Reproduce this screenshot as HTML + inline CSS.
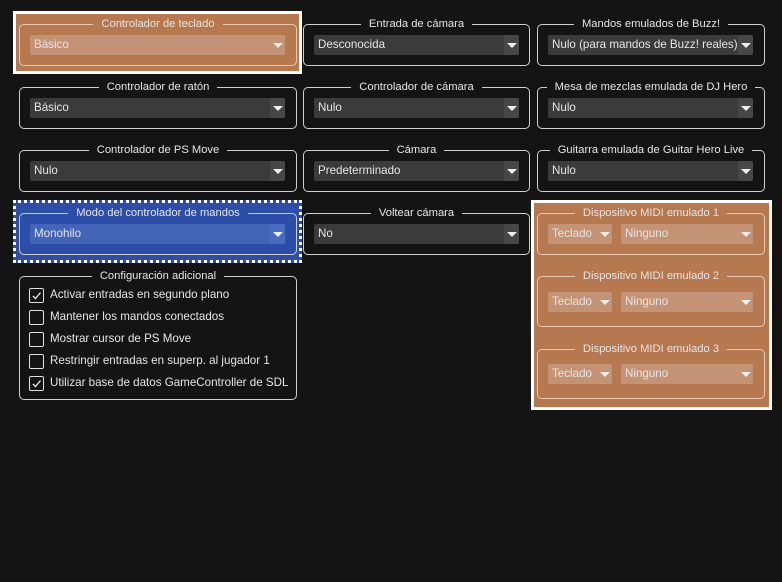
<!DOCTYPE html>
<html><head><meta charset="utf-8"><style>
*{box-sizing:border-box}
body{margin:0;width:782px;height:582px;background:#141414;font-family:"Liberation Sans",sans-serif;font-size:11.2px;color:#e6e6e6;position:relative;overflow:hidden}
.a{position:absolute}
.g{position:absolute;border:1px solid #cfcfcf;border-radius:5px}
.t{position:absolute;top:-9px;left:0;right:0;text-align:center;line-height:16px;white-space:nowrap}
.t span{background:#141414;padding:0 8px}
.c{position:absolute;height:20px;background:#3b3b3b;border-radius:2px;line-height:20px;padding-left:4px;font-size:11.6px;white-space:nowrap;overflow:hidden}
.c i{position:absolute;right:0;top:0;width:15px;height:20px;background:#474747}
.c i:after{content:"";position:absolute;left:3px;top:8px;border-left:5px solid transparent;border-right:5px solid transparent;border-top:5px solid #eee}
.br{background:#b5784f}.br .t span{background:#b5784f}.br .c{background:#c49376}.br .c i{background:#c49376}
.bl{background:#2c4ea8}.bl .t span{background:#2c4ea8}.bl .c{background:#4265b8}.bl .c i{background:#4a6cc0}
.cb{position:absolute;left:29px;width:15px;height:15px;border:1px solid #e0e0e0;border-radius:2px}
.cl{position:absolute;left:50px;font-size:11.6px;white-space:nowrap}
</style></head><body>
<div class="a br" style="left:13px;top:11px;width:289px;height:63px;border:3px solid #fff"></div>
<div class="a bl" style="left:13px;top:200px;width:289px;height:63px;border:3px dotted #fff"></div>
<div class="a br" style="left:531px;top:200px;width:241px;height:210px;border:3px solid #fff"></div>

<div class="br" style="position:absolute;left:0;top:0"><div class="g" style="left:19px;top:24px;width:278px;height:42px;border-color:#e8c9b0"><div class="t"><span>Controlador de teclado</span></div></div><div class="c" style="left:30px;top:35px;width:255px">Básico<i></i></div></div>
<div class="g" style="left:303px;top:24px;width:227px;height:42px"><div class="t"><span>Entrada de cámara</span></div></div><div class="c" style="left:314px;top:35px;width:205px">Desconocida<i></i></div>
<div class="g" style="left:537px;top:24px;width:228px;height:42px"><div class="t"><span>Mandos emulados de Buzz!</span></div></div><div class="c" style="left:548px;top:35px;width:205px">Nulo (para mandos de Buzz! reales)<i></i></div>

<div class="g" style="left:19px;top:87px;width:278px;height:42px"><div class="t"><span>Controlador de ratón</span></div></div><div class="c" style="left:30px;top:98px;width:255px">Básico<i></i></div>
<div class="g" style="left:303px;top:87px;width:227px;height:42px"><div class="t"><span>Controlador de cámara</span></div></div><div class="c" style="left:314px;top:98px;width:205px">Nulo<i></i></div>
<div class="g" style="left:537px;top:87px;width:228px;height:42px"><div class="t"><span>Mesa de mezclas emulada de DJ Hero</span></div></div><div class="c" style="left:548px;top:98px;width:205px">Nulo<i></i></div>

<div class="g" style="left:19px;top:150px;width:278px;height:42px"><div class="t"><span>Controlador de PS Move</span></div></div><div class="c" style="left:30px;top:161px;width:255px">Nulo<i></i></div>
<div class="g" style="left:303px;top:150px;width:227px;height:42px"><div class="t"><span>Cámara</span></div></div><div class="c" style="left:314px;top:161px;width:205px">Predeterminado<i></i></div>
<div class="g" style="left:537px;top:150px;width:228px;height:42px"><div class="t"><span>Guitarra emulada de Guitar Hero Live</span></div></div><div class="c" style="left:548px;top:161px;width:205px">Nulo<i></i></div>

<div class="bl" style="position:absolute;left:0;top:0"><div class="g" style="left:19px;top:213px;width:278px;height:42px"><div class="t"><span>Modo del controlador de mandos</span></div></div><div class="c" style="left:30px;top:224px;width:255px">Monohilo<i></i></div></div>
<div class="g" style="left:303px;top:213px;width:227px;height:42px"><div class="t"><span>Voltear cámara</span></div></div><div class="c" style="left:314px;top:224px;width:205px">No<i></i></div>

<div class="br" style="position:absolute;left:0;top:0">
<div class="g" style="left:537px;top:213px;width:228px;height:42px;border-color:#e8c9b0"><div class="t"><span>Dispositivo MIDI emulado 1</span></div></div>
<div class="c" style="left:548px;top:224px;width:64px">Teclado<i></i></div><div class="c" style="left:621px;top:224px;width:132px">Ninguno<i></i></div>
<div class="g" style="left:537px;top:276px;width:228px;height:51px;border-color:#e8c9b0"><div class="t"><span>Dispositivo MIDI emulado 2</span></div></div>
<div class="c" style="left:548px;top:292px;width:64px">Teclado<i></i></div><div class="c" style="left:621px;top:292px;width:132px">Ninguno<i></i></div>
<div class="g" style="left:537px;top:349px;width:228px;height:50px;border-color:#e8c9b0"><div class="t"><span>Dispositivo MIDI emulado 3</span></div></div>
<div class="c" style="left:548px;top:364px;width:64px">Teclado<i></i></div><div class="c" style="left:621px;top:364px;width:132px">Ninguno<i></i></div>
</div>

<div class="g" style="left:19px;top:276px;width:278px;height:124px"><div class="t"><span>Configuración adicional</span></div></div>
<div class="cb" style="top:288px"><svg width="13" height="13" style="position:absolute;left:0;top:0"><path d="M3 7 L5.5 9.5 L10.5 3.5" stroke="#eee" stroke-width="1.3" fill="none"/></svg></div><div class="cl" style="top:288px">Activar entradas en segundo plano</div>
<div class="cb" style="top:310px"></div><div class="cl" style="top:310px">Mantener los mandos conectados</div>
<div class="cb" style="top:332px"></div><div class="cl" style="top:332px">Mostrar cursor de PS Move</div>
<div class="cb" style="top:354px"></div><div class="cl" style="top:354px">Restringir entradas en superp. al jugador 1</div>
<div class="cb" style="top:376px"><svg width="13" height="13" style="position:absolute;left:0;top:0"><path d="M3 7 L5.5 9.5 L10.5 3.5" stroke="#eee" stroke-width="1.3" fill="none"/></svg></div><div class="cl" style="top:376px">Utilizar base de datos GameController de SDL</div>
</body></html>
